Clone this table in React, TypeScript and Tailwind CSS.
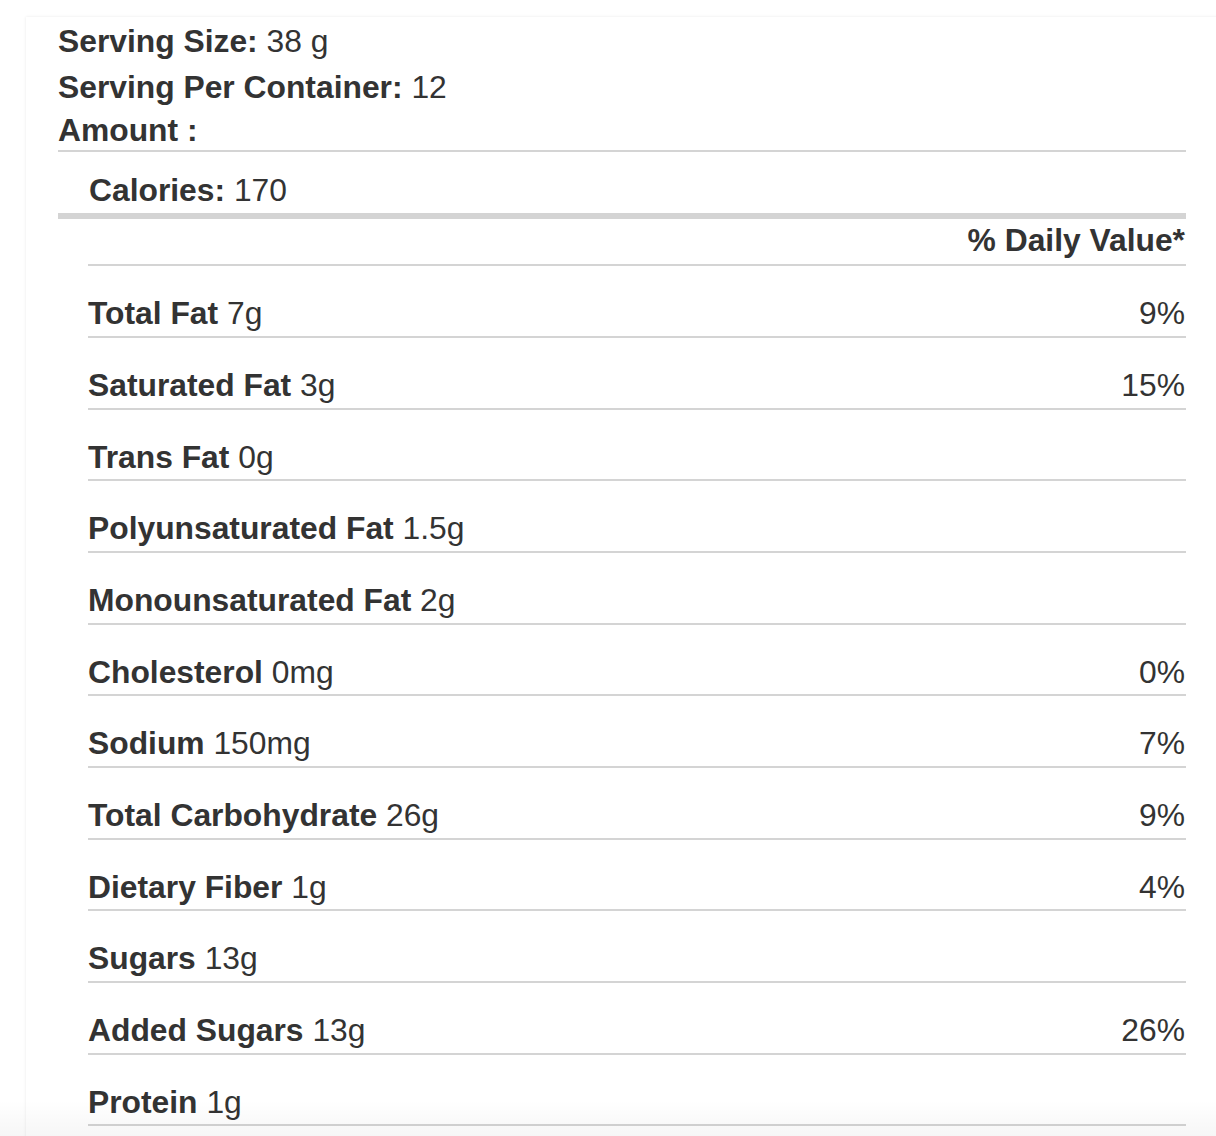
import React from "react";

const rows: { name: string; amount: string; dv?: string }[] = [
  { name: "Total Fat", amount: "7g", dv: "9%" },
  { name: "Saturated Fat", amount: "3g", dv: "15%" },
  { name: "Trans Fat", amount: "0g" },
  { name: "Polyunsaturated Fat", amount: "1.5g" },
  { name: "Monounsaturated Fat", amount: "2g" },
  { name: "Cholesterol", amount: "0mg", dv: "0%" },
  { name: "Sodium", amount: "150mg", dv: "7%" },
  { name: "Total Carbohydrate", amount: "26g", dv: "9%" },
  { name: "Dietary Fiber", amount: "1g", dv: "4%" },
  { name: "Sugars", amount: "13g" },
  { name: "Added Sugars", amount: "13g", dv: "26%" },
  { name: "Protein", amount: "1g" },
];

export default function App() {
  return (
    <div
      className="relative h-[1136px] overflow-hidden bg-white pl-[26px] pt-[17px] text-[#333] text-[31.8px] leading-[35.67px]"
      style={{ fontFamily: '"Liberation Sans", Arial, Helvetica, sans-serif' }}
    >
      <div className="h-[1200px] w-[1210px] bg-white shadow-[0_0_3px_rgba(0,0,0,0.09)] pl-[32px] pt-[6.7px]">
        <div className="w-[1128px]">
          <div>
            <span className="font-bold">Serving Size:</span> 38 g
          </div>
          <div className="mt-[11px]">
            <span className="font-bold">Serving Per Container:</span> 12
          </div>
          <div className="mt-[7px] font-bold">Amount :</div>
          <div className="mt-[1.2px] border-t-2 border-[#d4d4d4]" />
          <div className="mt-[21px] pl-[31px]">
            <span className="font-bold">Calories:</span> 170
          </div>
          <div className="mt-[4px] h-[6px] bg-[#d4d4d4]" />
          <div className="ml-[30px]">
            <div className="mt-[4px] pr-[1px] text-right font-bold">% Daily Value*</div>
            <div className="mt-[6px] border-t-2 border-[#d4d4d4]" />
            {rows.map((r) => (
              <div
                key={r.name}
                className="flex justify-between border-b-2 border-[#d4d4d4] pt-[30px] pb-[4px]"
              >
                <div>
                  <span className="font-bold">{r.name}</span> {r.amount}
                </div>
                <div className="pr-[1px]">{r.dv ?? ""}</div>
              </div>
            ))}
          </div>
        </div>
      </div>
      <div className="pointer-events-none absolute bottom-0 left-0 right-0 h-[36px] bg-gradient-to-b from-transparent to-[rgba(0,0,0,0.035)]" />
    </div>
  );
}
